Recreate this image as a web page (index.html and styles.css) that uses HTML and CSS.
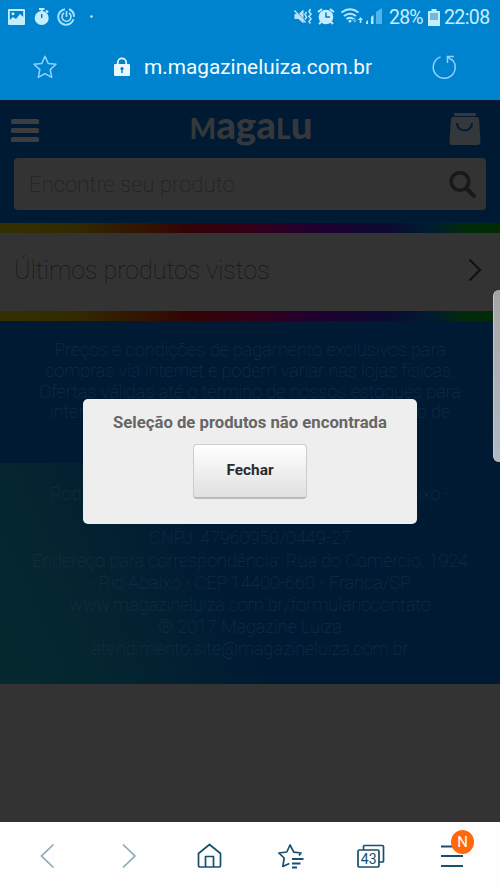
FILE: index.html
```html
<!DOCTYPE html>
<html lang="pt-BR">
<head>
<meta charset="utf-8">
<title>Magazine Luiza</title>
<link rel="stylesheet" href="styles.css">
</head>
<body>
<div class="phone">
  <header class="browser">
    <div class="status">
      <svg class="status-left" width="100" height="34" viewBox="0 0 100 34">
        <path fill="#c4edff" fill-rule="evenodd" d="M9 9h15a1 1 0 0 1 1 1v14a1 1 0 0 1-1 1H9a1 1 0 0 1-1-1V10a1 1 0 0 1 1-1zm.8 2v9l3.2-3 3 2 4-5 3.200 3V11z"/>
        <circle cx="13" cy="13.700" r="1.500" fill="#c4edff"/>
        <circle cx="41.700" cy="18" r="7" fill="#c4edff"/>
        <path d="M39 9h5.500M41.700 9v3M46 10.500l2 2" stroke="#c4edff" stroke-width="2"/>
        <path d="M41.700 14v4" stroke="#0c78ba" stroke-width="1.500"/>
        <path d="M65 9.200a7.800 7.800 0 1 0 8.500 10M69 9.200a7.800 7.800 0 0 1 5 7.500" fill="none" stroke="#a6e1ff" stroke-width="2"/>
        <path d="M64 13a4.500 4.500 0 1 0 5 0M66.500 11v6" fill="none" stroke="#a6e1ff" stroke-width="1.700"/>
        <circle cx="91.500" cy="16.500" r="1.300" fill="#b5e7ff"/>
      </svg>
      <div class="status-right">
        <svg width="96" height="34" viewBox="290 0 96 34">
          <path fill="#b5e2fa" d="M294.500 14h4l5-4.500v14l-5-4.500h-4z"/>
          <path d="M295 9l12 15" stroke="#0082cd" stroke-width="1"/>
          <path d="M294.500 10.500l11 12" fill="none" stroke="#b5e2fa" stroke-width="1.500"/>
          <path d="M306.500 12l-1.500 2.500 1.500 2.500-1.500 2.500M310.500 9l-1.500 2.500 2 2.500-2 2.500 2 2.500-2 2.500 1.500 2" fill="none" stroke="#b5e2fa" stroke-width="1.600"/>
          <circle cx="326" cy="17" r="7.300" fill="#c4edff"/>
          <path d="M318 12l4-3M330 9l4 3M321 22l-2 2M331 22l2 2" stroke="#c4edff" stroke-width="2"/>
          <path d="M326 12.500v4.500h4" fill="none" stroke="#0c78ba" stroke-width="1.500"/>
          <path d="M341.500 12.500q8.500-6.500 17 0M344 16q6-4.700 12 0M346.500 19q3.500-2.500 7 0" fill="none" stroke="#b5e7ff" stroke-width="1.900"/>
          <circle cx="350" cy="21" r="1.500" fill="#b5e7ff"/>
          <path fill="#b5e7ff" d="M358 20l2.500-3 2.500 3h-1.700v3h-1.600v-3z"/>
          <path fill="#50b4e8" d="M352.500 20h1.500v-2h1.500v2h1.500l-2.200 3zM376 12l6-4v16h-6z"/>
          <path fill="#b5e7ff" d="M366 24v-2l2-2v4zM371 24v-7l2.500-2v9z"/>
        </svg>
        <span class="pct">28%</span>
        <svg class="battery" width="12" height="17" viewBox="0 0 12 17"><path fill="#c4edff" d="M3.500 0h5v2H12v15H0V2h3.500z"/><path fill="#6fb9df" d="M2 4h8v7H2z"/></svg>
        <span class="clock">22:08</span>
      </div>
    </div>
    <div class="address">
      <svg class="fav" width="26" height="26" viewBox="0 0 26 26"><path d="M13 2.200l3.200 7.200 7.800.9-5.800 5.300 1.500 7.800L13 19.700l-6.700 3.700 1.500-7.800L2 10.300l7.800-.9z" fill="none" stroke="#8fd2ff" stroke-width="1.500" stroke-linejoin="round"/></svg>
      <div class="url">
        <svg width="16" height="20" viewBox="0 0 16 20"><path d="M3.800 8V5.500a4.200 4.200 0 0 1 8.400 0V8" fill="none" stroke="#e6f7ff" stroke-width="1.800"/><rect y="7" width="16" height="12" rx="1" fill="#e6f7ff"/><circle cx="8" cy="11.500" r="1.600" fill="#0878b6"/><path d="M8 11v5" stroke="#0878b6" stroke-width="1.400"/></svg>
        <span>m.magazineluiza.com.br</span>
      </div>
      <svg class="reload" width="26" height="26" viewBox="0 0 26 26"><path d="M9.500 2.900A11 11 0 1 0 20.500 5M16.500 9V2.500h6.500M16.500 2.500l4.500 4" fill="none" stroke="#8fd2f5" stroke-width="1.500"/></svg>
    </div>
  </header>

  <main class="site">
    <section class="top">
      <div class="brand">
        <svg width="28" height="24" viewBox="0 0 28 24" fill="#3b3d3f"><rect width="28" height="5" rx="1.500"/><rect y="9" width="28" height="5" rx="1.500"/><rect y="18" width="28" height="5" rx="1.500"/></svg>
        <div class="logo"><span class="cap">M</span>aga<span class="cap">L</span>u</div>
        <svg width="32" height="34" viewBox="0 0 32 34"><rect x="5" y="1" width="22" height="3" rx="1" fill="#35383a"/><path d="M4 5h24a2 2 0 0 1 2 2l1.500 23a3 3 0 0 1-3 3h-25a3 3 0 0 1-3-3L2 7a2 2 0 0 1 2-2z" fill="#35383a"/><path d="M8 11c0 10 15 10 15 0" fill="none" stroke="#001a33" stroke-width="2"/></svg>
      </div>
      <div class="search">
        <span>Encontre seu produto</span>
        <svg width="28" height="29" viewBox="0 0 28 29"><circle cx="11" cy="11.500" r="8.800" fill="none" stroke="#191919" stroke-width="3.600"/><path d="M17.500 18.500l7.500 7.500" stroke="#191919" stroke-width="4" stroke-linecap="round"/></svg>
      </div>
    </section>
    <div class="rainbow"></div>
    <section class="recent">
      <span>Últimos produtos vistos</span>
      <svg width="14" height="24" viewBox="0 0 14 24"><path d="M1.500 1.500L12 12 1.500 22.500" fill="none" stroke="#111" stroke-width="2"/></svg>
    </section>
    <div class="rainbow"></div>
    <section class="terms">
      <div>Preços e condições de pagamento exclusivos para</div>
      <div>compras via internet e podem variar nas lojas físicas.</div>
      <div>Ofertas válidas até o término de nossos estoques para</div>
      <div class="split"><span>inter</span><span>o de</span></div>
    </section>
    <section class="company">
      <div class="split"><span>Rod</span><span>ixo -</span></div>
      <div class="gap"></div>
      <div>CNPJ: 47960950/0449-27</div>
      <div>Endereço para correspondência: Rua do Comércio, 1924</div>
      <div>- Rio Abaixo - CEP:14400-660 - Franca/SP</div>
      <div>www.magazineluiza.com.br/formulariocontato</div>
      <div>® 2017 Magazine Luiza</div>
      <div>atendimento.site@magazineluiza.com.br</div>
    </section>
    <div class="dialog">
      <p>Seleção de produtos não encontrada</p>
      <button type="button">Fechar</button>
    </div>
    <div class="edge-handle"></div>
  </main>

  <nav class="toolbar">
    <svg width="28" height="28" viewBox="0 0 28 28"><path d="M19.500 2.500L7.500 14l12 11.500" fill="none" stroke="#88a9bb" stroke-width="1.700"/></svg>
    <svg width="28" height="28" viewBox="0 0 28 28"><path d="M8 2.500l12 11.500-12 11.500" fill="none" stroke="#88a9bb" stroke-width="1.700"/></svg>
    <svg width="28" height="28" viewBox="0 0 28 28"><path d="M2.500 11.500l11-9 11 9V23.500a1.500 1.500 0 0 1-1.500 1.500h-19A1.500 1.500 0 0 1 2.500 23.500zM9.500 25V14.500h8V25" fill="none" stroke="#17506f" stroke-width="1.700" stroke-linejoin="round"/></svg>
    <svg width="28" height="28" viewBox="0 0 28 28"><path d="M23 13.500l2-2.500-7.200-.8L14 3l-3.200 7-8 1 5.400 5-1.400 8.500 6.500-3" fill="none" stroke="#17506f" stroke-width="1.700" stroke-linejoin="round"/><path d="M16 17h11.500M16 21.500h8.500M16 25.500h5" stroke="#17506f" stroke-width="1.800"/></svg>
    <div class="tabs"><svg width="28" height="28" viewBox="0 0 28 28"><path d="M6.500 8V4.500a1 1 0 0 1 1-1h18a1 1 0 0 1 1 1V19a1 1 0 0 1-1 1H22M2.500 8h18a1.500 1.500 0 0 1 1.500 1.500v14a1.500 1.500 0 0 1-1.500 1.500h-18A1.500 1.500 0 0 1 1 23.500v-14A1.500 1.500 0 0 1 2.500 8z" fill="none" stroke="#17506f" stroke-width="1.700"/></svg><span>43</span></div>
    <div class="menu"><svg width="28" height="28" viewBox="0 0 28 28"><path d="M3 4.500h22M3 14h22M3 24h22" stroke="#17506f" stroke-width="1.800"/></svg><span>N</span></div>
  </nav>
</div>
</body>
</html>
```

FILE: styles.css
```css
* { box-sizing: border-box; }
body { margin: 0; font-family: Roboto, "Liberation Sans", sans-serif; }
svg { display: block; flex: none; }
.phone { width: 500px; height: 889px; display: flex; flex-direction: column; overflow: hidden; background: #333; white-space: nowrap; }

.browser { height: 100px; background: #0083ce; }
.status { height: 34px; display: flex; justify-content: space-between; }
.status-right { display: flex; align-items: center; width: 210px; color: #c4edff; font-size: 19.5px; }
.pct { width: 38px; margin-left: 3px; letter-spacing: -.8px; }
.battery { margin: 0 0 0 1px; }
.clock { margin-left: 4px; letter-spacing: -.6px; }
.address { height: 66px; display: flex; align-items: center; padding: 0 43px 0 32px; }
.url { flex: 1; display: flex; align-items: center; gap: 14px; padding-left: 56px; color: #f2fbff; font-size: 20.8px; }

.site { position: relative; height: 722px; background: #333; }
.top { height: 123px; background: #001a33; padding: 12px 14px 0; }
.brand { height: 46px; display: flex; justify-content: space-between; align-items: flex-start; margin: 0 5px 0 -3px; }
.brand > svg:first-child { margin-top: 7px; }
.logo { margin-left: 14px; font: 900 38.5px/25px Lato, sans-serif; color: #35383a; }
.cap { font-size: 28px; }
.search { height: 52px; display: flex; align-items: center; justify-content: space-between; padding: 0 9px 0 15px; border-radius: 4px; background: #333; color: #1c1c1c; font-size: 22.2px; font-weight: 100; }
.rainbow { height: 10px; background: linear-gradient(90deg, #333000 0, #332b00 14%, #331500 28%, #330306 38%, #33001a 51%, #200030 63%, #0c0b33 78%, #001c30 86%, #002b0c 93%, #002c00 100%); }
.recent { height: 78px; display: flex; align-items: center; justify-content: space-between; padding: 0 18px 4px 14px; color: #151515; font-size: 25px; font-weight: 100; }
.terms { height: 142px; padding-top: 19px; background: #001a33; color: #17324a; font-size: 18.05px; line-height: 20.8px; font-weight: 100; text-align: center; }
.company { height: 221px; padding-top: 20px; background: linear-gradient(66deg, #06292f 0, #042530 20%, #001a33 45%); color: #17324a; font-size: 18.05px; line-height: 22.2px; font-weight: 100; text-align: center; }
.split { display: flex; justify-content: space-between; padding: 0 50px; }
.gap { height: 22.2px; }

.dialog { position: absolute; left: 83px; top: 299px; width: 334px; height: 125px; display: flex; flex-direction: column; align-items: center; border-radius: 5px; background: #eee; }
.dialog p { margin: 13px 0 11px; font-size: 16.7px; line-height: 21px; font-weight: 700; color: #666; }
.dialog button { width: 114px; height: 55px; padding: 0 0 3px; border: 1px solid #ccc; border-bottom: 2px solid #bbb; border-radius: 4px; background: linear-gradient(#fff, #e0e0e0); font: 700 15.4px Roboto, sans-serif; color: #2b2b2b; }
.edge-handle { position: absolute; right: 0; top: 190px; width: 7px; height: 172px; border-radius: 6px 0 0 6px; background: linear-gradient(#a3a3a3, #a9abad 20%, #b0b8c0 100%); border-left: 1px solid #c8c8c8; }

.toolbar { height: 67px; display: flex; align-items: center; justify-content: space-between; padding: 1px 34px 0; background: #fefefe; }
.tabs, .menu { position: relative; }
.tabs span { position: absolute; left: 1px; top: 9px; width: 21px; text-align: center; font-size: 14px; line-height: 16px; color: #17506f; }
.menu span { position: absolute; left: 13px; top: -12px; width: 23px; height: 24px; border-radius: 50%; background: #ff690c; color: #fff; text-align: center; font-size: 15px; line-height: 24px; }
```
